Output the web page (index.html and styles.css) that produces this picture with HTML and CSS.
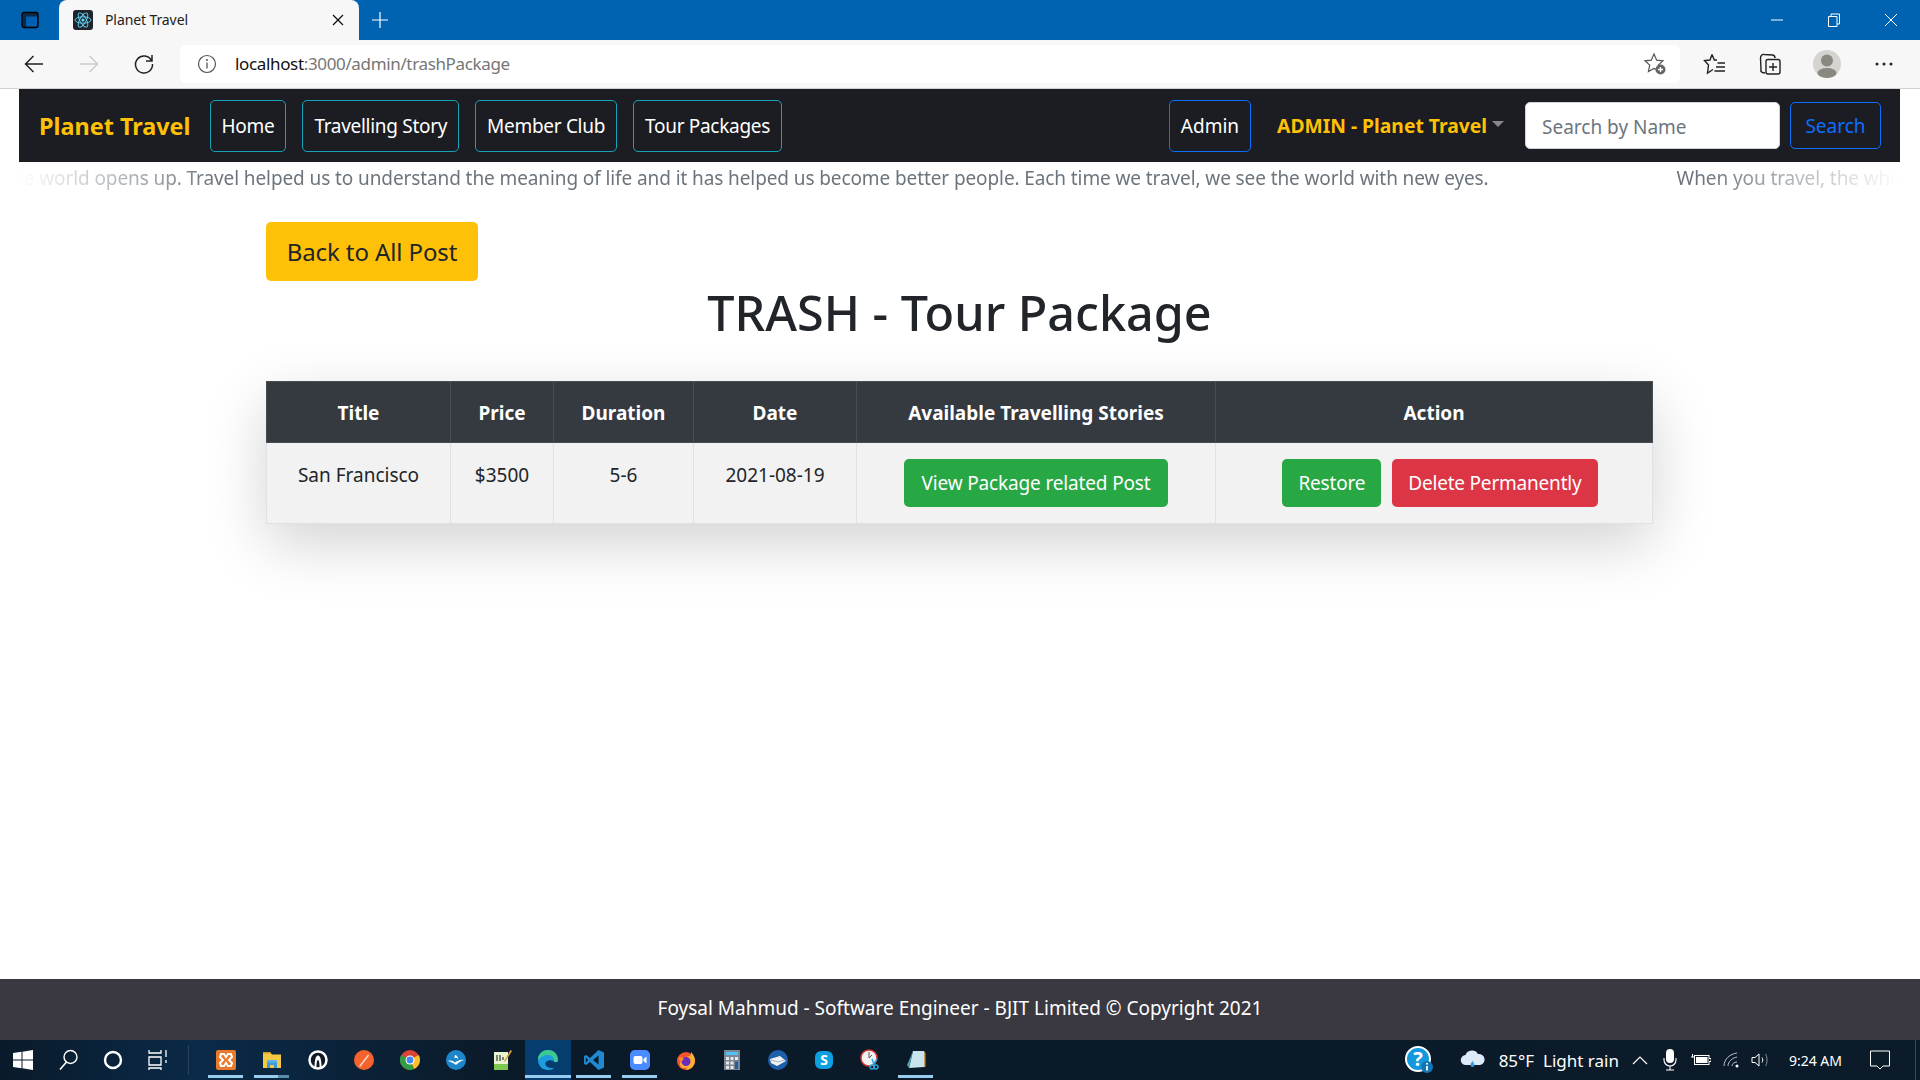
FILE: index.html
```html
<!DOCTYPE html>
<html lang="en">
<head>
    <meta charset="UTF-8">
    <meta name="viewport" content="width=device-width, initial-scale=1.0">
    <title>Planet Travel</title>
    <link rel="stylesheet" href="styles.css">
</head>
<body>
    <div class="tabbar">
        <svg class="tab-actions" width="20" height="20" viewBox="0 0 20 20"><rect x="2" y="2.500" width="16" height="15" rx="2" fill="#0a2a4a" stroke="#000" stroke-width="1.300"/><rect x="6" y="6.500" width="11" height="10" fill="#0060b0"/></svg>
        <div class="tab">
            <svg class="favicon" width="20" height="20" viewBox="0 0 20 20"><rect width="20" height="20" rx="3" fill="#20232a"/><g fill="none" stroke="#61dafb" stroke-width=".9"><ellipse cx="10" cy="10" rx="8" ry="3.200"/><ellipse cx="10" cy="10" rx="8" ry="3.200" transform="rotate(60 10 10)"/><ellipse cx="10" cy="10" rx="8" ry="3.200" transform="rotate(120 10 10)"/></g><circle cx="10" cy="10" r="1.600" fill="#61dafb"/></svg>
            <span class="tab-title">Planet Travel</span>
            <svg class="tab-close" width="12" height="12" viewBox="0 0 12 12"><path d="M1 1l10 10M11 1L1 11" stroke="#111" stroke-width="1.300"/></svg>
        </div>
        <svg class="new-tab" width="18" height="18" viewBox="0 0 18 18"><path d="M9 1v16M1 9h16" stroke="#fff" stroke-width="1.200"/></svg>
        <div class="window-btns">
            <svg width="14" height="14" viewBox="0 0 14 14"><path d="M1 7h12" stroke="#fff"/></svg>
            <svg width="14" height="14" viewBox="0 0 14 14"><path d="M1.500 3.500h8.500v10h-8.500zM4 3.500V1h8.500v10H10" fill="none" stroke="#fff"/></svg>
            <svg width="14" height="14" viewBox="0 0 14 14"><path d="M1 1l12 12M13 1L1 13" stroke="#fff"/></svg>
        </div>
    </div>

    <div class="toolbar">
        <svg class="nav-icon" width="22" height="22" viewBox="0 0 22 22"><path d="M20 11H2.500M10.500 3l-8 8 8 8" fill="none" stroke="#222" stroke-width="1.500"/></svg>
        <svg class="nav-icon" width="22" height="22" viewBox="0 0 22 22"><path d="M2 11h17.500M11.500 3l8 8-8 8" fill="none" stroke="#ccc" stroke-width="1.500"/></svg>
        <svg class="nav-icon" width="22" height="22" viewBox="0 0 22 22"><path d="M18.500 7.500A8.500 8.500 0 1 0 19.500 11M19 2v6h-6" fill="none" stroke="#222" stroke-width="1.500"/></svg>
        <div class="addressbar">
            <svg width="20" height="20" viewBox="0 0 20 20"><circle cx="10" cy="10" r="8.500" fill="none" stroke="#555" stroke-width="1.200"/><path d="M10 8.500v6" stroke="#555" stroke-width="1.300"/><circle cx="10" cy="6" r="1" fill="#555"/></svg>
            <span class="url"><span class="url-host">localhost</span>:3000/admin/trashPackage</span>
            <svg class="star-add" width="24" height="24" viewBox="0 0 24 24"><path d="M11 2l2.700 6.200 6.300.6-4.700 4.300 1.300 6.400L11 16.400l-5.600 3.100 1.300-6.400L2 8.800l6.300-.6z" fill="none" stroke="#555" stroke-width="1.200"/><circle cx="17.500" cy="17.500" r="5" fill="#666"/><path d="M17.500 15v5M15 17.500h5" stroke="#fff" stroke-width="1.300"/></svg>
        </div>
        <div class="toolbar-icons">
            <svg width="24" height="24" viewBox="0 0 24 24"><path d="M9 2.500l2.300 5.500h2.700M9 2.500L7 8l-5.500.5L5.500 13 4.500 21l5.500-3.500M14.500 11H22M13 15h9M11.500 19H22" fill="none" stroke="#222" stroke-width="1.400"/></svg>
            <svg width="24" height="24" viewBox="0 0 24 24"><path d="M7 21l-2.500-.5C3 20 2.500 19 3 17.500L2.500 6.500C2.500 3.500 4 2 6.500 2.500l8 .5c2 .2 2.500 1.500 2.500 3" fill="none" stroke="#222" stroke-width="1.400"/><rect x="8" y="7.500" width="14" height="14.500" rx="2" fill="#f7f7f7" stroke="#222" stroke-width="1.400"/><path d="M15 11v8M11 15h8" stroke="#222" stroke-width="1.400"/></svg>
            <svg width="28" height="28" viewBox="0 0 28 28"><circle cx="14" cy="14" r="14" fill="#d6d4d0"/><circle cx="14" cy="10.500" r="6" fill="#8b8781"/><ellipse cx="14" cy="23" rx="9.500" ry="5" fill="#8b8781"/></svg>
            <svg width="24" height="24" viewBox="0 0 24 24"><circle cx="5" cy="12" r="1.500" fill="#222"/><circle cx="12" cy="12" r="1.500" fill="#222"/><circle cx="19" cy="12" r="1.500" fill="#222"/></svg>
        </div>
    </div>

    <div class="page">
        <nav class="navbar">
            <a class="brand">Planet Travel</a>
            <a class="nav-btn info">Home</a>
            <a class="nav-btn info">Travelling Story</a>
            <a class="nav-btn info">Member Club</a>
            <a class="nav-btn info">Tour Packages</a>
            <div class="nav-right">
                <a class="nav-btn primary">Admin</a>
                <a class="nav-user">ADMIN - Planet Travel<span class="caret"></span></a>
                <form class="search">
                    <input type="text" placeholder="Search by Name">
                    <button type="button">Search</button>
                </form>
            </div>
        </nav>

        <div class="marquee">
            <div class="marquee-track">
                <span>When you travel, the whole world opens up. Travel helped us to understand the meaning of life and it has helped us become better people. Each time we travel, we see the world with new eyes.</span>
                <span>When you travel, the whole world opens up.</span>
            </div>
        </div>

        <main class="container">
            <a class="btn-back">Back to All Post</a>
            <h1>TRASH - Tour Package</h1>
            <table class="trash-table">
                <thead>
                    <tr>
                        <th class="col-title">Title</th>
                        <th class="col-price">Price</th>
                        <th class="col-duration">Duration</th>
                        <th class="col-date">Date</th>
                        <th class="col-stories">Available Travelling Stories</th>
                        <th class="col-action">Action</th>
                    </tr>
                </thead>
                <tbody>
                    <tr>
                        <td>San Francisco</td>
                        <td>$3500</td>
                        <td>5-6</td>
                        <td>2021-08-19</td>
                        <td><a class="btn green wide">View Package related Post</a></td>
                        <td class="cell-actions"><a class="btn green">Restore</a><a class="btn red">Delete Permanently</a></td>
                    </tr>
                </tbody>
            </table>
        </main>

        <footer class="footer">Foysal Mahmud - Software Engineer - BJIT Limited © Copyright 2021</footer>
    </div>

    <div class="taskbar">
        <div class="task-left">
            <div class="sys-btn"><svg width="20" height="20" viewBox="0 0 20 20"><path d="M0 3l8.500-1.200v7.700H0zM9.500 1.700L20 0v9.500H9.500zM0 10.500h8.500v7.700L0 17zM9.500 10.500H20V20L9.500 18.300z" fill="#fff"/></svg></div>
            <div class="sys-btn"><svg width="22" height="22" viewBox="0 0 22 22"><circle cx="13.500" cy="8" r="6.500" fill="none" stroke="#fff" stroke-width="1.400"/><path d="M9.500 13L3 20.500" stroke="#fff" stroke-width="1.600"/></svg></div>
            <div class="sys-btn"><svg width="20" height="20" viewBox="0 0 20 20"><circle cx="10" cy="10" r="8" fill="none" stroke="#fff" stroke-width="2.400"/></svg></div>
            <div class="sys-btn"><svg width="22" height="22" viewBox="0 0 22 22"><path d="M2 1v3h12V1M2 8h12v8H2zM2 21v-2h12v2M19 1v7M19 11v3" fill="none" stroke="#fff" stroke-width="1.300"/></svg></div>
            <span class="task-sep"></span>
            <div class="app open"><svg width="20" height="20" viewBox="0 0 20 20"><rect width="20" height="20" rx="2" fill="#ea7b2c"/><path d="M5 4h3l2 3 2-3h3l1 3-3 3 3 3-1 3h-3l-2-3-2 3H5l-1-3 3-3-3-3z" fill="none" stroke="#fff" stroke-width="2"/></svg></div>
            <div class="app open split"><svg width="20" height="20" viewBox="0 0 20 20"><path d="M1 2h7l2 2.500h9V18H1z" fill="#f6c945"/><path d="M1 2h7l1 1.500H1z" fill="#d99c1f"/><path d="M5 12h10v6h-3v-3H8v3H5z" fill="#3d9bdc"/><rect x="5" y="10" width="10" height="2.500" fill="#58b3ee"/></svg></div>
            <div class="app"><svg width="20" height="20" viewBox="0 0 20 20"><circle cx="10" cy="10" r="8.500" fill="#0f1a26" stroke="#fff" stroke-width="2.500"/><path d="M6.500 17c0-6 1-11.500 3.500-11.500S13.500 11 13.500 17z" fill="#fff"/><path d="M8.500 17c0-4 .5-7 1.500-7s1.500 3 1.500 7z" fill="#0f1a26"/></svg></div>
            <div class="app"><svg width="20" height="20" viewBox="0 0 20 20"><circle cx="10" cy="10" r="10" fill="#f4622d"/><path d="M5 16L14 4.500l1.200 1L6.200 17z" fill="#ffd9c4"/></svg></div>
            <div class="app"><svg width="20" height="20" viewBox="0 0 20 20"><circle cx="10" cy="10" r="10" fill="#db4437"/><path d="M10 10L18.700 5a10 10 0 0 1-4.700 14z" fill="#fbc02d"/><path d="M10 10l4 9A10 10 0 0 1 1.300 5z" fill="#2f9e44"/><circle cx="10" cy="10" r="4.500" fill="#fff"/><circle cx="10" cy="10" r="3.400" fill="#4285f4"/></svg></div>
            <div class="app"><svg width="20" height="20" viewBox="0 0 20 20"><circle cx="10" cy="10" r="10" fill="#1c86c9"/><path d="M2 11c3-1 5 0 7 1.500C11 11 15 9 18 10c-3 .5-6 3-8 5C8 13 5 12 2 11z" fill="#fff"/><path d="M9 5c2 .5 3 2 3 4-1-1-2.500-1.500-4-1 .5-1 1-2 1-3z" fill="#fff"/></svg></div>
            <div class="app"><svg width="20" height="20" viewBox="0 0 20 20"><rect x="2" y="2" width="14" height="18" fill="#e8f5d0"/><rect x="2" y="14" width="14" height="6" fill="#7ec850"/><path d="M5 5v6M8 5v6M11 7v3" stroke="#333" stroke-width="1.200"/><path d="M18.500 0L12 11l1 1L20 1z" fill="#d9a441"/></svg></div>
            <div class="app active"><svg width="22" height="22" viewBox="0 0 22 22"><path d="M21 11.500C21 5 16.500 1 11 1 5 1 1 5.500 1 11c0 6 4.500 10 10 10 3 0 5-.8 7-2.500-3 1-8 .8-9.500-2.500-.8-2 .5-4 3-4.500 3-.5 5 .5 6 1.500 2 .5 3.500-.5 3.500-1.500z" fill="#1f9be0"/><path d="M1 11C1 5.500 5 1 11 1c5.500 0 10 4 10 10.500 0 1-1.500 2-3.500 1.500 0-5-3.500-7.500-7-7C7 6 3 8 1 11z" fill="#3ccb8e"/></svg></div>
            <div class="app open"><svg width="20" height="20" viewBox="0 0 20 20"><path d="M14.500 0L20 2.500v15L14.500 20 6 12l-3.800 3L0 14V6l2.200-1L6 8z" fill="#1f8ad2"/><path d="M14.500 5.500L9 10l5.500 4.500z" fill="#0f1a26"/><path d="M1.800 7.500V12.500L4.200 10z" fill="#0f1a26"/></svg></div>
            <div class="app open"><svg width="20" height="20" viewBox="0 0 20 20"><rect width="20" height="20" rx="5" fill="#4a8cff"/><rect x="3.500" y="6" width="9" height="8" rx="2" fill="#fff"/><path d="M13.500 9l3-2.500v7l-3-2.500z" fill="#fff"/></svg></div>
            <div class="app"><svg width="20" height="20" viewBox="0 0 20 20"><circle cx="10" cy="11" r="9" fill="#f5522d"/><path d="M10 20a9 9 0 0 0 9-9c0-4-2-7-4-9 .5 3-1 4-3 4.500C9 7 8 9 8 10a4 4 0 1 0 4 4z" fill="#fbb034"/><circle cx="10" cy="11.500" r="4.500" fill="#6b2bbf"/><path d="M2 8c2-1 4-1 6 1l-3 3z" fill="#f98a2b"/></svg></div>
            <div class="app"><svg width="16" height="20" viewBox="0 0 16 20"><rect width="16" height="20" fill="#7a8692"/><rect x="2" y="2" width="12" height="3" fill="#4fc3f7"/><g fill="#e5e9ec"><rect x="2" y="7" width="3" height="3"/><rect x="6.500" y="7" width="3" height="3"/><rect x="11" y="7" width="3" height="3"/><rect x="2" y="11.500" width="3" height="3"/><rect x="6.500" y="11.500" width="3" height="3"/><rect x="2" y="16" width="3" height="3"/><rect x="6.500" y="16" width="3" height="3"/></g><rect x="11" y="11.500" width="3" height="7.500" fill="#1f5f9e"/></svg></div>
            <div class="app"><svg width="20" height="20" viewBox="0 0 20 20"><circle cx="10" cy="10" r="10" fill="#1d5fa8"/><path d="M2 9l10-3 6 5-9 5-6-3z" fill="#f2f2f2"/><path d="M3 10l7 2 7-2" fill="none" stroke="#9db4c8"/></svg></div>
            <div class="app"><svg width="20" height="20" viewBox="0 0 20 20"><rect x="1" y="1" width="18" height="18" rx="6" fill="#0e9fe0"/><text class="skype-s" x="10" y="15" text-anchor="middle">S</text></svg></div>
            <div class="app"><svg width="22" height="22" viewBox="0 0 22 22"><circle cx="10" cy="9" r="8" fill="#f2f2f2" stroke="#d33" stroke-width="1.500"/><path d="M10 3v6l3-3" stroke="#555" fill="none"/><path d="M13 10l2 6M18 10l-4 6" stroke="#29a8e0" stroke-width="1.400"/><circle cx="13" cy="18" r="2" fill="none" stroke="#29a8e0" stroke-width="1.400"/><circle cx="17" cy="18" r="2" fill="none" stroke="#29a8e0" stroke-width="1.400"/></svg></div>
            <div class="app open"><svg width="20" height="20" viewBox="0 0 20 20"><path d="M7 1h11v16l-15 1z" fill="#c9e4ef"/><path d="M7 1L3 18l-2-3z" fill="#4f9fb0"/><path d="M18 1v16h1.500V3z" fill="#c59a52"/></svg></div>
        </div>
        <div class="tray">
            <svg class="tray-help" width="28" height="28" viewBox="0 0 28 28"><circle cx="13" cy="13" r="12" fill="#1497dc" stroke="#fff" stroke-width="2"/><text class="help-q" x="13" y="20" text-anchor="middle">?</text><circle cx="22" cy="21" r="6" fill="#1474b4"/><path d="M22 20v4.500" stroke="#fff" stroke-width="1.800"/><circle cx="22" cy="17.800" r="1" fill="#fff"/></svg>
            <svg class="tray-cloud" width="26" height="20" viewBox="0 0 26 20"><path d="M6 15a5 5 0 0 1-.5-10A7 7 0 0 1 18 4a5.500 5.500 0 0 1 2 11z" fill="#dcebf7"/><path d="M12.500 11c1 1.500 2 2.500 2 4a2 2 0 0 1-4 0c0-1.500 1-2.500 2-4z" fill="#3b9ae0"/></svg>
            <span class="weather">85°F&nbsp; Light rain</span>
            <svg class="tray-chevron" width="16" height="10" viewBox="0 0 16 10"><path d="M1 9l7-7 7 7" fill="none" stroke="#fff" stroke-width="1.200"/></svg>
            <svg class="tray-mic" width="14" height="22" viewBox="0 0 14 22"><rect x="3" y="0" width="8" height="14" rx="4" fill="#fff"/><path d="M1 9v2a6 6 0 0 0 12 0V9M7 17v4M3 21h8" fill="none" stroke="#fff" stroke-width="1.100"/></svg>
            <svg class="tray-battery" width="20" height="14" viewBox="0 0 20 14"><rect x="3.500" y="2.500" width="14.500" height="9" fill="none" stroke="#fff"/><rect x="5" y="4" width="11.500" height="6" fill="#fff"/><path d="M18 5.500h2v3h-2M0 4h3M1.500 1v3" stroke="#fff"/></svg>
            <svg class="tray-wifi" width="18" height="16" viewBox="0 0 18 16"><path d="M1 14C1 7 7 2 14 1M5 14c0-4 4-8 9-9M9 14c0-2 2-4 5-4" fill="none" stroke="#b9c2c9" stroke-width="1"/><circle cx="14" cy="14" r="1.500" fill="#fff"/></svg>
            <svg class="tray-volume" width="20" height="16" viewBox="0 0 20 16"><path d="M1 5.500h3L8 2v12l-4-3.500H1z" fill="none" stroke="#fff"/><path d="M11 5.500c1 1.500 1 3.500 0 5" fill="none" stroke="#fff"/><path d="M14.500 2c2 3 2 9 0 12" fill="none" stroke="#8a949c"/></svg>
            <span class="clock">9:24 AM</span>
            <svg class="tray-notify" width="20" height="20" viewBox="0 0 20 20"><path d="M.5 1h19v15H13l-3 3-3-3H.5z" fill="none" stroke="#fff"/></svg>
        </div>
    </div>
</body>
</html>
```

FILE: styles.css
```css
* {
    box-sizing: border-box;
}
html, body {
    height: 100%;
}
body {
    margin: 0;
    display: flex;
    flex-direction: column;
    height: 1080px;
    overflow: hidden;
    background: #fff;
    font-family: "Noto Sans", sans-serif;
    font-size: 19px;
    color: #212529;
}

/* browser chrome */
.tabbar {
    height: 40px;
    flex: none;
    background: #0063b1;
    display: flex;
    align-items: center;
}
.tab-actions {
    margin: 0 19px 0 20px;
}
.tab {
    width: 300px;
    height: 40px;
    background: #f7f7f7;
    border-radius: 8px 8px 0 0;
    display: flex;
    align-items: center;
    padding: 0 15px 0 14px;
}
.tab-title {
    font-size: 14px;
    margin: 0 0 1px 12px;
    flex: 1;
    color: #222;
    letter-spacing: -.1px;
}
.new-tab {
    margin-left: 12px;
}
.window-btns {
    margin-left: auto;
    display: flex;
    gap: 43px;
    padding-right: 22px;
}
.toolbar {
    height: 49px;
    flex: none;
    background: #f7f7f7;
    border-bottom: 1px solid #d2d2d2;
    display: flex;
    align-items: center;
    padding-left: 23px;
}
.nav-icon {
    margin-right: 33px;
}
.addressbar {
    width: 1500px;
    height: 38px;
    margin-left: -8px;
    background: #fff;
    border-radius: 6px;
    display: flex;
    align-items: center;
    padding: 0 13px 0 17px;
}
.url {
    font-size: 17px;
    margin: 0 0 2px 18px;
    flex: 1;
    color: #767676;
    letter-spacing: -.35px;
}
.url-host {
    color: #111;
}
.toolbar-icons {
    display: flex;
    align-items: center;
    gap: 31px;
    margin-left: 23px;
}

/* page */
.page {
    flex: 1;
    display: flex;
    flex-direction: column;
    min-height: 0;
}
.navbar {
    margin: 0 20px 0 19px;
    height: 73px;
    background: #1c1d22;
    display: flex;
    align-items: center;
    padding: 0 19px 0 20px;
}
.brand {
    color: #ffc107;
    font-size: 23.4px;
    font-weight: 700;
    margin-right: 19px;
    white-space: nowrap;
}
.nav-btn {
    height: 52px;
    padding: 0 11px;
    margin-right: 16px;
    border: 1px solid #17a2b8;
    border-radius: 5px;
    color: #fff;
    display: flex;
    align-items: center;
    white-space: nowrap;
    letter-spacing: -.3px;
}
.nav-btn.primary {
    border-color: #0d6efd;
    margin-right: 26px;
    letter-spacing: 0;
}
.nav-right {
    margin-left: auto;
    display: flex;
    align-items: center;
}
.nav-user {
    color: #ffc107;
    font-weight: 700;
    white-space: nowrap;
    display: flex;
    align-items: center;
    font-size: 19.3px;
    margin-right: 21px;
}
.caret {
    width: 0;
    height: 0;
    margin-left: 5px;
    margin-bottom: 3px;
    border-top: 6px solid #888;
    border-left: 6px solid transparent;
    border-right: 6px solid transparent;
}
.search {
    display: flex;
    gap: 10px;
}
.search input {
    width: 255px;
    height: 47px;
    padding: 2px 16px 0;
    font: inherit;
    border: 1px solid #ced4da;
    border-radius: 5px;
    background: #fff;
}
.search input::placeholder {
    color: #6c757d;
}
.search button {
    width: 91px;
    height: 47px;
    font: inherit;
    color: #0d6efd;
    background: transparent;
    border: 1px solid #0d6efd;
    border-radius: 5px;
}
.marquee {
    margin: 0 20px 0 19px;
    height: 32px;
    overflow: hidden;
    color: #6c757d;
    -webkit-mask-image: linear-gradient(to right, transparent, #000 200px, #000 1680px, transparent);
    mask-image: linear-gradient(to right, transparent, #000 200px, #000 1680px, transparent);
}
.marquee-track {
    display: flex;
    gap: 188px;
    margin-left: -225px;
    white-space: nowrap;
    line-height: 32px;
    letter-spacing: -.1px;
}
.container {
    width: 1387px;
    margin: 28px 267px 0 266px;
    flex: 1;
}
.btn-back {
    display: inline-block;
    width: 212px;
    height: 59px;
    line-height: 59px;
    text-align: center;
    background: #ffc107;
    border-radius: 5px;
    font-size: 24px;
    color: #212529;
    letter-spacing: -.1px;
}
h1 {
    margin: 0;
    height: 100px;
    font-size: 48.5px;
    font-weight: 500;
    text-align: center;
    line-height: 62px;
}
.trash-table {
    width: 1387px;
    table-layout: fixed;
    border-collapse: collapse;
    background: #f2f2f2;
    box-shadow: 0 20px 60px rgba(0, 0, 0, .175);
}
.trash-table th, .trash-table td {
    border: 1px solid #dee2e6;
    text-align: center;
}
.trash-table th {
    height: 61px;
    padding-top: 2px;
    background: #343a40;
    border-color: #454d55;
    color: #fff;
    font-weight: 700;
}
.trash-table td {
    height: 80px;
    padding: 16px 0;
    vertical-align: top;
    line-height: 33px;
}
.trash-table .cell-actions {
    padding-left: 12px;
}
.col-title { width: 184px; }
.col-price { width: 103px; }
.col-duration { width: 140px; }
.col-date { width: 163px; }
.col-stories { width: 359px; }
.btn {
    display: inline-block;
    height: 48px;
    line-height: 49px;
    padding: 0 16px;
    vertical-align: top;
    border-radius: 5px;
    color: #fff;
    white-space: nowrap;
    letter-spacing: -.2px;
}
.btn.wide {
    padding: 0 17px;
    letter-spacing: -.15px;
}
.btn.green {
    background: #28a745;
}
.btn.red {
    background: #dc3545;
    margin-left: 11px;
}
.footer {
    height: 61px;
    flex: none;
    padding-bottom: 4px;
    background: #3a3840;
    color: #fff;
    display: flex;
    align-items: center;
    justify-content: center;
}

/* windows taskbar */
.taskbar {
    height: 40px;
    flex: none;
    background: linear-gradient(to right, #0a1a2a, #0a2a48 200px, #0b1a29 500px, #0b1b2a);
    display: flex;
    align-items: center;
    justify-content: space-between;
    color: #fff;
}
.task-left {
    display: flex;
    align-items: center;
    height: 40px;
}
.sys-btn {
    width: 45px;
    height: 40px;
    display: flex;
    align-items: center;
    justify-content: center;
}
.task-sep {
    width: 1px;
    height: 30px;
    margin: 0 14px 0 8px;
    background: #2c4257;
}
.app {
    width: 46px;
    height: 40px;
    display: flex;
    align-items: center;
    justify-content: center;
    position: relative;
}
.app.open::after {
    content: "";
    position: absolute;
    left: 5px;
    right: 6px;
    bottom: 2px;
    height: 3px;
    background: #99cdf0;
}
.app.split::after {
    background: linear-gradient(to right, #99cdf0 70%, #5d8cab 70%);
}
.app.active {
    background: #063d6e;
}
.app.active::after {
    content: "";
    position: absolute;
    left: 0;
    right: 0;
    bottom: 2px;
    height: 3px;
    background: #99cdf0;
}
.skype-s {
    font-family: "Noto Sans", sans-serif;
    font-size: 14px;
    font-weight: 700;
    fill: #fff;
}
.help-q {
    font-family: "Noto Sans", sans-serif;
    font-size: 20px;
    font-weight: 700;
    fill: #fff;
}
.tray {
    display: flex;
    align-items: center;
    height: 40px;
    padding-right: 25px;
    border-right: 1px solid #3a4a58;
    margin-right: 4px;
}
.weather {
    font-size: 17px;
    margin-left: 13px;
    white-space: nowrap;
}
.tray-cloud {
    margin-left: 27px;
}
.tray-chevron {
    margin-left: 13px;
}
.tray-mic {
    margin-left: 15px;
}
.tray-battery {
    margin-left: 14px;
}
.tray-wifi {
    margin-left: 12px;
}
.tray-volume {
    margin-left: 10px;
}
.clock {
    font-size: 14px;
    margin-left: 18px;
    white-space: nowrap;
}
.tray-notify {
    margin-left: 28px;
}
```
